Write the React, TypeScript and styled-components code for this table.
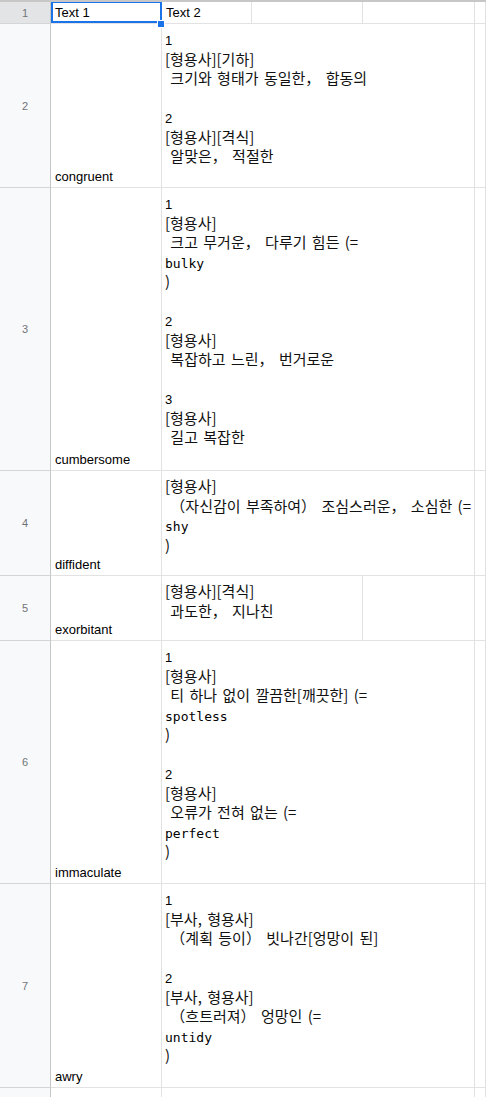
import React from 'react'
import styled, { createGlobalStyle } from 'styled-components'

const GlobalStyle = createGlobalStyle`
  html, body {
    margin: 0;
    padding: 0;
    background: #fff;
    overflow: hidden;
  }
  body {
    font-family: "Liberation Sans", Arial, sans-serif;
  }
`

const Sheet = styled.div`
  position: relative;
  width: 486px;
  height: 1097px;
  overflow: hidden;
  border-top: 2px solid #c7c7c7;
  box-sizing: border-box;
`

const Row = styled.div<{ $h: number }>`
  display: grid;
  grid-template-columns: 51px 111px 90px 111px 112px 1fr;
  height: ${p => p.$h}px;
`

const RowHead = styled.div<{ $active?: boolean }>`
  display: flex;
  align-items: center;
  justify-content: center;
  background: ${p => (p.$active ? '#e3e4e6' : '#f8f9fa')};
  border-right: 1px solid #c4c7c5;
  border-bottom: 1px solid #d3d5d6;
  color: #707478;
  font-size: 11px;
  box-sizing: border-box;
`

const Cell = styled.div<{ $span?: number }>`
  grid-column: span ${p => p.$span ?? 1};
  border-right: 1px solid #e2e2e2;
  border-bottom: 1px solid #e2e2e2;
  box-sizing: border-box;
  min-width: 0;
`

const WordCell = styled(Cell)`
  display: flex;
  align-items: flex-end;
  padding: 0 4px 2px;
  font-size: 13px;
  line-height: 17px;
  color: #000;
`

const DefCell = styled(Cell)`
  padding: 5px 3px 0;
  font-family: "Noto Sans CJK KR", "Liberation Sans", sans-serif;
  font-size: 15px;
  word-spacing: 2px;
  color: #111;
  white-space: pre;
`

const Line = styled.div`
  height: 19.5px;
  line-height: 19.5px;
`

const Num = styled.span`
  font-family: "Liberation Sans", Arial, sans-serif;
  font-size: 13px;
  color: #000;
`

const Mono = styled.span`
  font-family: "DejaVu Sans Mono", "Liberation Mono", monospace;
  font-size: 13px;
  color: #000;
`

const Selection = styled.div`
  position: absolute;
  left: 51px;
  top: -1px;
  width: 111px;
  height: 22px;
  border: 2px solid #1a73e8;
  box-sizing: border-box;
  pointer-events: none;
`

const Handle = styled.div`
  position: absolute;
  left: 157px;
  top: 18px;
  width: 6px;
  height: 6px;
  background: #1a73e8;
  border: 1px solid #fff;
`

type Entry = {
  n: number
  word: string
  h: number
  span: number
  lines: string[]
}

const entries: Entry[] = [
  {
    n: 2,
    word: 'congruent',
    h: 164,
    span: 3,
    lines: ['1', '[형용사][기하]', ' 크기와 형태가 동일한， 합동의', '', '2', '[형용사][격식]', ' 알맞은， 적절한'],
  },
  {
    n: 3,
    word: 'cumbersome',
    h: 283,
    span: 3,
    lines: [
      '1', '[형용사]', ' 크고 무거운， 다루기 힘든 (=', '`bulky', ')', '',
      '2', '[형용사]', ' 복잡하고 느린， 번거로운', '',
      '3', '[형용사]', ' 길고 복잡한',
    ],
  },
  {
    n: 4,
    word: 'diffident',
    h: 105,
    span: 3,
    lines: ['[형용사]', ' （자신감이 부족하여） 조심스러운， 소심한 (=', '`shy', ')'],
  },
  {
    n: 5,
    word: 'exorbitant',
    h: 65,
    span: 2,
    lines: ['[형용사][격식]', ' 과도한， 지나친'],
  },
  {
    n: 6,
    word: 'immaculate',
    h: 243,
    span: 3,
    lines: [
      '1', '[형용사]', ' 티 하나 없이 깔끔한[깨끗한] (=', '`spotless', ')', '',
      '2', '[형용사]', ' 오류가 전혀 없는 (=', '`perfect', ')',
    ],
  },
  {
    n: 7,
    word: 'awry',
    h: 204,
    span: 3,
    lines: [
      '1', '[부사, 형용사]', ' （계획 등이） 빗나간[엉망이 된]', '',
      '2', '[부사, 형용사]', ' （흐트러져） 엉망인 (=', '`untidy', ')',
    ],
  },
  {
    n: 8,
    word: 'askew',
    h: 220,
    span: 3,
    lines: ['1', '[형용사]', ' 비뚤어진'],
  },
]

const renderLine = (text: string, i: number) => {
  if (text.startsWith('`')) return <Line key={i}><Mono>{text.slice(1)}</Mono></Line>
  if (/^\d+$/.test(text)) return <Line key={i}><Num>{text}</Num></Line>
  return <Line key={i}>{text}</Line>
}

const App = () => {
  return (
    <>
      <GlobalStyle />
      <Sheet>
        <Row $h={22}>
          <RowHead $active>1</RowHead>
          <WordCell>Text 1</WordCell>
          <WordCell>Text 2</WordCell>
          <Cell />
          <Cell />
          <Cell />
        </Row>
        {entries.map(e => (
          <Row key={e.n} $h={e.h}>
            <RowHead>{e.n}</RowHead>
            <WordCell>{e.word}</WordCell>
            <DefCell $span={e.span}>{e.lines.map(renderLine)}</DefCell>
            {e.span < 3 && <Cell $span={3 - e.span} />}
            <Cell />
          </Row>
        ))}
        <Selection />
        <Handle />
      </Sheet>
    </>
  )
}

export default App
